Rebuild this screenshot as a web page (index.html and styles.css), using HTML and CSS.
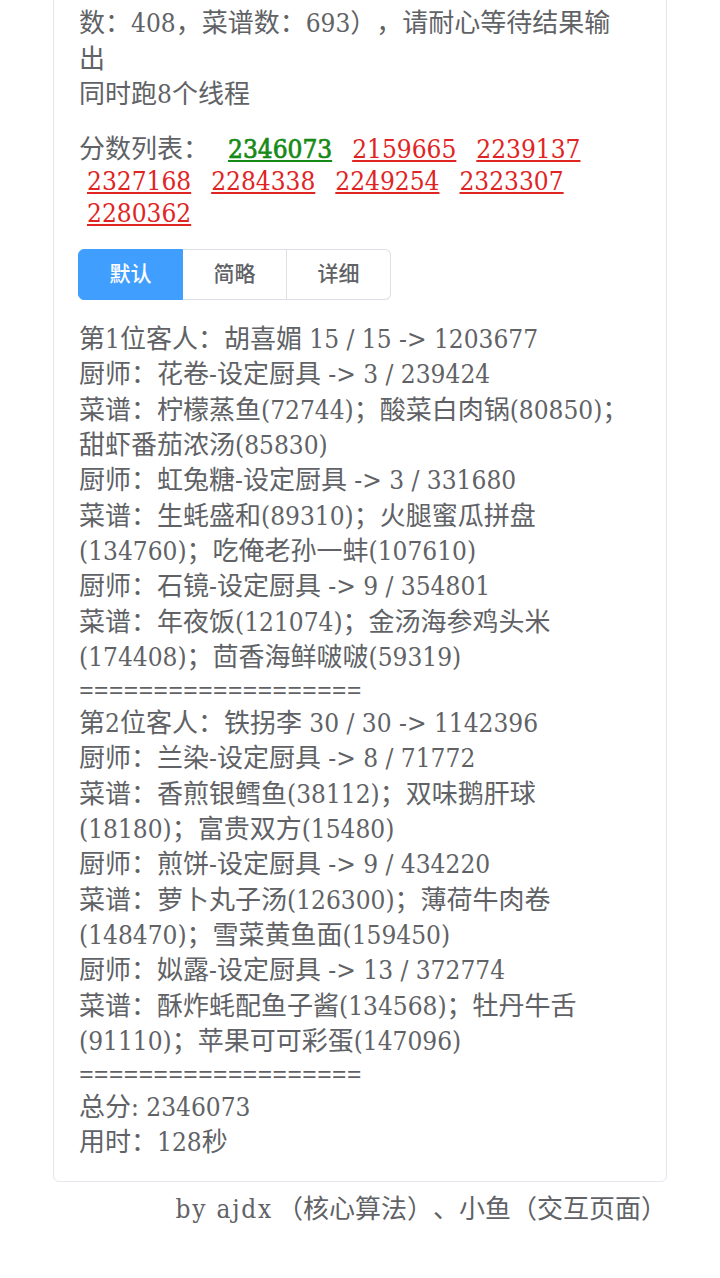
FILE: index.html
```html
<!DOCTYPE html>
<html lang="zh-CN">
<head>
<meta charset="utf-8">
<title>计算结果</title>
<link rel="stylesheet" href="styles.css">
</head>
<body>
<div class="page">
  <div class="card">
    <div class="status">
      <div>开始计算（厨师数：232，厨具<br>数：408，菜谱数：693），请耐心等待结果输出</div>
      <div>同时跑8个线程</div>
    </div>
    <div class="scores"><span class="label">分数列表：</span><a class="score best">2346073</a><a class="score">2159665</a><a class="score">2239137</a><a class="score">2327168</a><a class="score">2284338</a><a class="score">2249254</a><a class="score">2323307</a><a class="score">2280362</a></div>
    <div class="tabs">
      <button class="tab active">默认</button><button class="tab">简略</button><button class="tab">详细</button>
    </div>
    <div class="result">
      <div class="line">第1位客人：胡喜媚 15 / 15 -&gt; 1203677</div>
      <div class="line">厨师：花卷-设定厨具 -&gt; 3 / 239424</div>
      <div class="line">菜谱：柠檬蒸鱼(72744)；酸菜白肉锅(80850)；甜虾番茄浓汤(85830)</div>
      <div class="line">厨师：虹兔糖-设定厨具 -&gt; 3 / 331680</div>
      <div class="line">菜谱：生蚝盛和(89310)；火腿蜜瓜拼盘(134760)；吃俺老孙一蚌(107610)</div>
      <div class="line">厨师：石镜-设定厨具 -&gt; 9 / 354801</div>
      <div class="line">菜谱：年夜饭(121074)；金汤海参鸡头米(174408)；茴香海鲜啵啵(59319)</div>
      <div class="sep">===================</div>
      <div class="line">第2位客人：铁拐李 30 / 30 -&gt; 1142396</div>
      <div class="line">厨师：兰染-设定厨具 -&gt; 8 / 71772</div>
      <div class="line">菜谱：香煎银鳕鱼(38112)；双味鹅肝球(18180)；富贵双方(15480)</div>
      <div class="line">厨师：煎饼-设定厨具 -&gt; 9 / 434220</div>
      <div class="line">菜谱：萝卜丸子汤(126300)；薄荷牛肉卷(148470)；雪菜黄鱼面(159450)</div>
      <div class="line">厨师：姒露-设定厨具 -&gt; 13 / 372774</div>
      <div class="line">菜谱：酥炸蚝配鱼子酱(134568)；牡丹牛舌(91110)；苹果可可彩蛋(147096)</div>
      <div class="sep">===================</div>
      <div class="line">总分: 2346073</div>
      <div class="line">用时：128秒</div>
    </div>
  </div>
  <div class="footer"><span class="by">by ajdx</span>（核心算法）、小鱼（交互页面）</div>
</div>
</body>
</html>
```

FILE: styles.css
```css
html, body {
  margin: 0;
  padding: 0;
  background: #ffffff;
}

body {
  font-family: "DejaVu Serif Condensed", "DejaVu Serif", "Noto Sans CJK SC", serif;
  font-stretch: condensed;
  font-size: 26px;
  color: #606266;
  text-spacing-trim: space-all;
}

.page {
  margin-top: -50px;
  padding: 0 53px;
}

.card {
  border: 1px solid #e4e7ed;
  border-radius: 6px;
  background: #fff;
  padding: 20px 25px 20px;
}

.status {
  line-height: 35.3px;
  padding-right: 20px;
}

.scores {
  margin-top: 21px;
  line-height: 32px;
}

.label {
  margin-right: 11px;
}

.score {
  display: inline-block;
  color: #e02424;
  text-decoration: underline;
  margin: 0 12px 0 8px;
  cursor: pointer;
}

.score.best {
  color: #168a16;
  -webkit-text-stroke: 0.7px #168a16;
}

.tabs {
  display: flex;
  margin-top: 20px;
  margin-left: -1px;
}

.tab {
  font-family: "Noto Sans CJK SC", sans-serif;
  font-size: 21px;
  font-weight: 500;
  color: #606266;
  background: #fff;
  border: 1px solid #dcdfe6;
  border-left: 0;
  height: 51px;
  padding: 0 30.5px 5px;
  margin: 0;
}

.tab:first-child {
  border-left: 1px solid #dcdfe6;
  border-radius: 6px 0 0 6px;
}

.tab:last-child {
  border-radius: 0 6px 6px 0;
}

.tab.active {
  background: #409eff;
  border-color: #409eff;
  color: #fff;
}

.result {
  margin-top: 22px;
}

.line {
  line-height: 35.3px;
}

.sep {
  font-family: "Noto Sans", sans-serif;
  font-stretch: normal;
  line-height: 31px;
}

.footer {
  margin-top: 10px;
  text-align: right;
  padding-right: 0;
  line-height: 35px;
}

.by {
  font-stretch: normal;
  letter-spacing: 1.8px;
  margin-right: 4px;
}
```
